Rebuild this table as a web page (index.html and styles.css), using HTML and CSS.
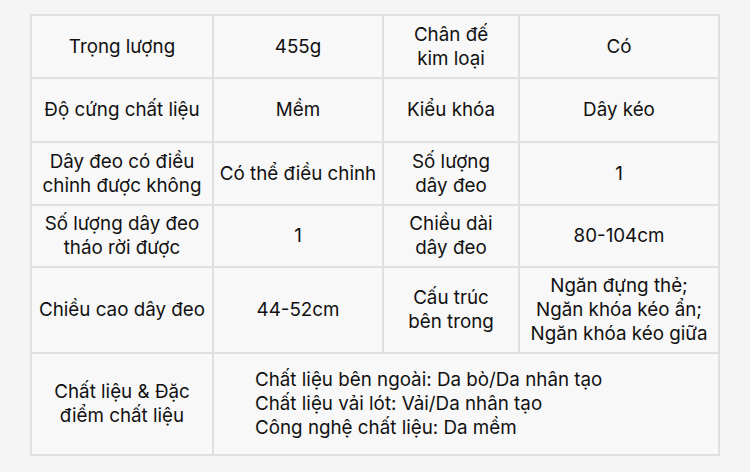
FILE: index.html
```html
<!DOCTYPE html>
<html lang="vi">
<head>
<meta charset="utf-8">
<link rel="stylesheet" href="styles.css">
</head>
<body>
<table class="spec">
  <colgroup>
    <col class="c1"><col class="c2"><col class="c3"><col class="c4">
  </colgroup>
  <tr class="r1">
    <td>Trọng lượng</td>
    <td>455g</td>
    <td>Chân đế<br>kim loại</td>
    <td>Có</td>
  </tr>
  <tr class="r2">
    <td>Độ cứng chất liệu</td>
    <td>Mềm</td>
    <td>Kiểu khóa</td>
    <td>Dây kéo</td>
  </tr>
  <tr class="r3">
    <td>Dây đeo có điều<br>chỉnh được không</td>
    <td>Có thể điều chỉnh</td>
    <td>Số lượng<br>dây đeo</td>
    <td>1</td>
  </tr>
  <tr class="r4">
    <td>Số lượng dây đeo<br>tháo rời được</td>
    <td>1</td>
    <td>Chiều dài<br>dây đeo</td>
    <td>80-104cm</td>
  </tr>
  <tr class="r5">
    <td>Chiều cao dây đeo</td>
    <td>44-52cm</td>
    <td>Cấu trúc<br>bên trong</td>
    <td>Ngăn đựng thẻ;<br>Ngăn khóa kéo ẩn;<br>Ngăn khóa kéo giữa</td>
  </tr>
  <tr class="r6">
    <td>Chất liệu &amp; Đặc<br>điểm chất liệu</td>
    <td colspan="3" class="left">Chất liệu bên ngoài: Da bò/Da nhân tạo<br>Chất liệu vải lót: Vải/Da nhân tạo<br>Công nghệ chất liệu: Da mềm</td>
  </tr>
</table>
</body>
</html>
```
FILE: styles.css
```css
html, body {
  margin: 0;
  padding: 0;
  background: #f5f5f5;
}
body {
  padding: 14px 0 0 30px;
  font-family: Inter, "Noto Sans", "Liberation Sans", sans-serif;
  font-size: 18.8px;
  line-height: 24px;
  color: #111111;
}
.spec {
  border-collapse: collapse;
  table-layout: fixed;
  width: 688px;
  background: #f8f8f8;
}
.spec td {
  border: 2px solid #e0e0e0;
  text-align: center;
  vertical-align: middle;
  padding: 0;
  white-space: nowrap;
}
.c1 { width: 182px; }
.c2 { width: 170px; }
.c3 { width: 136px; }
.c4 { width: 200px; }
.r1 { height: 63px; }
.r2 { height: 64px; }
.r3 { height: 63px; }
.r4 { height: 62px; }
.r5 { height: 86px; }
.r6 { height: 102px; }
.spec td.left {
  text-align: left;
  padding-left: 41px;
}
```
